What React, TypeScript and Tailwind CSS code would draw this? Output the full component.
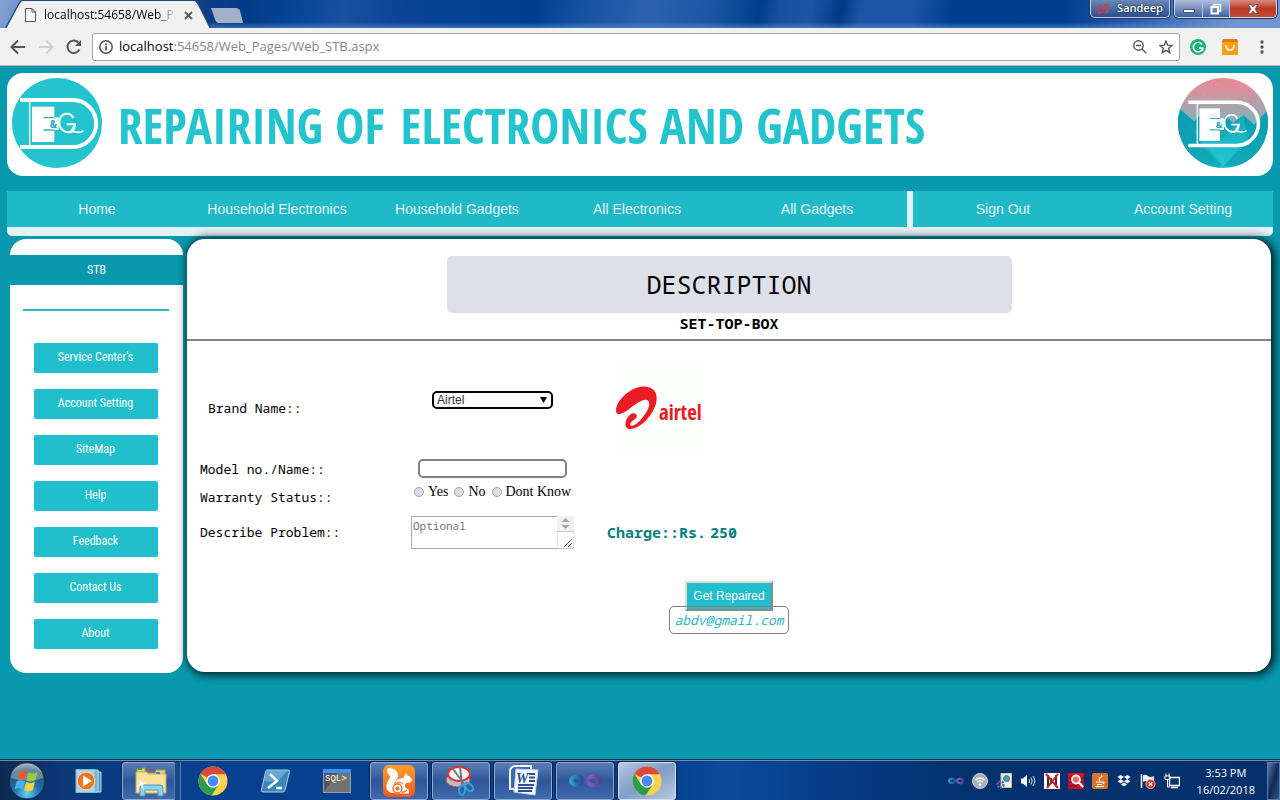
import type { ReactNode } from "react";

const mono = "font-['Noto_Sans_Mono','DejaVu_Sans_Mono',monospace]";
const segoe = "font-['Open_Sans','Noto_Sans',sans-serif]";

function Monogram() {
  return (
    <g fill="none" stroke="#fff">
      <path d="M24 66H182A70.500 70.500 0 0 1 182 207H24" strokeWidth="12" />
      <path d="M53 66V207" strokeWidth="4" />
      <path d="M60 86H127V192H60Z" fill="#fff" stroke="none" />
      <path d="M127 118H140V156H127Z" fill="#fff" stroke="none" />
      <path d="M94 119H127M94 156H127" stroke="#24b9c6" strokeWidth="4" />
      <path d="M184 120C176 102 150 103 143 124C137 146 153 164 171 163C186 162 187 150 189 139H164" strokeWidth="6" />
      <path d="M189 139L176 161C190 157 200 171 214 158" strokeWidth="5" />
      <text x="113" y="149" fontSize="29" fontWeight="700" fontFamily="Open Sans, sans-serif" fill="#24a9b8" stroke="none">&amp;</text>
    </g>
  );
}

function LogoPlain() {
  return (
    <svg className="size-[90px] shrink-0" viewBox="0 0 270 270" aria-hidden="true">
      <circle cx="135" cy="135" r="135" fill="#24c4cf" />
      <Monogram />
    </svg>
  );
}

function LogoScene() {
  return (
    <svg className="size-[90px] shrink-0" viewBox="0 0 270 270" aria-hidden="true">
      <defs>
        <linearGradient id="sky" x1="0" y1="0" x2="0" y2="1">
          <stop offset="0" stopColor="#e58a97" />
          <stop offset="0.12" stopColor="#dc909c" />
          <stop offset="0.5" stopColor="#7fb5bd" />
        </linearGradient>
        <linearGradient id="hill" x1="0" y1="0" x2="0" y2="1">
          <stop offset="0.3" stopColor="#0da0b1" />
          <stop offset="1" stopColor="#25cbd6" />
        </linearGradient>
        <clipPath id="disc"><circle cx="135" cy="135" r="135" /></clipPath>
      </defs>
      <g clipPath="url(#disc)">
        <rect width="270" height="270" fill="url(#sky)" />
        <path d="M0 88L48 130L75 105L110 140L145 115L165 135L197 112L228 140L270 95V270H0Z" fill="url(#hill)" />
        <path d="M0 110L135 265L0 270Z" fill="#0a9dae" opacity=".7" />
        <path d="M270 110L135 265L270 270Z" fill="#0a9dae" opacity=".7" />
        <path d="M60 190L135 268L210 190L197 112L135 180Z" fill="#22c6d1" opacity=".45" />
        <path d="M112 17l3 4M75 50h2M90 57h2M200 60h2M148 55h2" stroke="#f5ccd2" strokeWidth="2" />
      </g>
      <g transform="translate(9 12) scale(.92)"><Monogram /></g>
    </svg>
  );
}

function ChromeIcon() {
  return (
    <svg className="size-[30px]" viewBox="0 0 30 30" aria-hidden="true">
      <circle cx="15" cy="15" r="14.500" fill="#ffd24d" />
      <path d="M15 15L2.400 7.800A14.500 14.500 0 0 1 27.800 8.200H15Z" fill="#d94a3d" />
      <path d="M2.400 7.800A14.500 14.500 0 0 0 13.500 29.400L20.900 18.400L15 15L9.100 18.400Z" fill="#2f9a50" />
      <circle cx="15" cy="15" r="6.800" fill="#fff" />
      <circle cx="15" cy="15" r="5.400" fill="#4a8af4" />
    </svg>
  );
}

function StartOrb() {
  return (
    <svg className="size-[38px]" viewBox="0 0 38 38" aria-hidden="true">
      <defs>
        <radialGradient id="orb" cx=".5" cy=".85" r=".9">
          <stop offset="0" stopColor="#5fd7ee" />
          <stop offset=".4" stopColor="#1d6da5" />
          <stop offset=".75" stopColor="#2c5278" />
          <stop offset="1" stopColor="#a9bccb" />
        </radialGradient>
      </defs>
      <circle cx="19" cy="19" r="18" fill="url(#orb)" stroke="#0b2340" />
      <path d="M3 16A16 15 0 0 1 35 16Q19 21 3 16Z" fill="#fff" opacity=".3" />
      <path d="M11 11Q15 7 19 10L17 18Q13 15 9 18Z" fill="#f0562a" />
      <path d="M20.500 10.500Q25 13 29.500 10L27.500 18Q23 21 18.500 18.500Z" fill="#9bcb3c" />
      <path d="M8.500 19.500Q13 16.500 17 19.500L15 27.500Q11 24.500 6.500 27.500Z" fill="#47aef0" />
      <path d="M18 20Q22.500 22.500 27 19.500L25 27.500Q20.500 31 16 28Z" fill="#fdd040" />
    </svg>
  );
}

function MediaIcon() {
  return (
    <svg className="h-6 w-7" viewBox="0 0 28 24" aria-hidden="true">
      <path d="M10 3H26V23H10Z" fill="#4f96bd" stroke="#a9dcf2" />
      <path d="M6 1H23V23H6Z" fill="#6db3d6" stroke="#b9e6f7" />
      <path d="M1 .5H20V23.500H1Z" fill="#a8d6ea" stroke="#7fb9d4" />
      <circle cx="11" cy="12" r="8.800" fill="#ee7420" stroke="#fbd0a8" />
      <path d="M8 6.500L17 12L8 17.500Z" fill="#fff" />
    </svg>
  );
}

function FolderIcon() {
  return (
    <svg className="size-8" viewBox="0 0 32 32" aria-hidden="true">
      <path d="M2 4L10 3V8H20L21 5H30V28H2Z" fill="#e9cf7c" stroke="#b6974a" />
      <path d="M1 7H12L13 9H31V28H1Z" fill="#f6e3a0" stroke="#c6a95a" />
      <path d="M3 4h4" stroke="#2aa84a" strokeWidth="2" />
      <path d="M12 6h4" stroke="#d8442a" strokeWidth="2" />
      <path d="M21 8h4" stroke="#2c8ae0" strokeWidth="2" />
      <path d="M5 31V23Q5 20 8 20H25Q28 20 28 23V31H23V25H10V31Z" fill="#8fd0ea" stroke="#4b9cc4" />
      <path d="M7 13L8 18L12 17L8 20L9 25L6 21L1 22L5 18L3 14L7 17Z" fill="#fff" opacity=".8" />
    </svg>
  );
}

function PowerShellIcon() {
  return (
    <svg className="h-6 w-8" viewBox="0 0 32 24" aria-hidden="true">
      <path d="M8 1H29Q31 1 30.500 3L26 21Q25.500 23 24 23H4Q2 23 2.500 21L6.500 3Q7 1 8 1Z" fill="#3a86bb" stroke="#a9d5ea" />
      <path d="M8 1H29L20 11Q12 14 5 12Z" fill="#85bcdc" opacity=".6" />
      <path d="M11 5L18 12L9 19M17 19H23" fill="none" stroke="#fff" strokeWidth="2.500" />
    </svg>
  );
}

function SqlIcon() {
  return (
    <svg className="h-6 w-7" viewBox="0 0 28 24" aria-hidden="true">
      <rect x=".5" y=".5" width="27" height="23" fill="#555" stroke="#90a0b4" />
      <path d="M14 4H27V23L1 23Z" fill="#858585" opacity=".6" />
      <rect width="28" height="4" fill="#3f8ff8" />
      <text x="2" y="12" fontSize="9" fontFamily="Liberation Mono, monospace" fill="#fff">SQL&gt;</text>
    </svg>
  );
}

function SquirrelIcon() {
  return (
    <svg className="size-8" viewBox="0 0 32 32" aria-hidden="true">
      <defs>
        <linearGradient id="fur" x1="0" y1="0" x2="0" y2="1">
          <stop offset="0" stopColor="#fca12b" />
          <stop offset="1" stopColor="#f4581d" />
        </linearGradient>
      </defs>
      <rect width="32" height="32" rx="6" fill="url(#fur)" />
      <path d="M5 3C12 3 16 7 15 12C14.500 15 12 16 11 19C10 22 10 25 12 28H8C3 26 2 20 5 16C7 13 8 12 6 10C4 8 4 5 5 3Z" fill="#fff" />
      <path d="M12 19C13 15 17 13 20 13L22 10L23 8L24.500 10.500C27 11 28.500 13 29 15.500C28 17.500 25 18 23 18C21.500 20 21.500 22 23 23C26 24 26.500 26 26 28.500H12Z" fill="#fff" />
      <path d="M11 21Q15 15 20 19M24 25Q22 27 19 27.500" fill="none" stroke="#f77a26" strokeWidth="1.300" />
      <circle cx="14.500" cy="23.500" r="4.500" fill="#fff" stroke="#f66a20" strokeWidth="1.400" />
      <circle cx="14.500" cy="23.500" r="2" fill="#f66a20" />
    </svg>
  );
}

function SnipIcon() {
  return (
    <svg className="size-8" viewBox="0 0 32 32" aria-hidden="true">
      <ellipse cx="13" cy="15" rx="12" ry="7" fill="#b8bfc8" stroke="#c44" />
      <ellipse cx="14" cy="9" rx="11" ry="7" fill="#f3f4f6" stroke="#e2322d" strokeWidth="2" />
      <path d="M8 4L20 20M15 2L17 20" stroke="#707880" strokeWidth="2" />
      <ellipse cx="24" cy="22" rx="3" ry="5" transform="rotate(-45 24 22)" fill="none" stroke="#31a5dc" strokeWidth="2" />
      <ellipse cx="17" cy="25" rx="3" ry="5" transform="rotate(5 17 25)" fill="none" stroke="#31a5dc" strokeWidth="2" />
    </svg>
  );
}

function WordIcon() {
  return (
    <svg className="size-8" viewBox="0 0 32 32" aria-hidden="true">
      <path d="M3 24V7Q3 1 9 1H24V24Z" fill="#3d68ae" stroke="#f1f5fc" strokeWidth="2" />
      <path d="M9 4L31 5L28 30L7 27Z" fill="#f5f8fd" stroke="#c5d3e8" />
      <path d="M22 9H28M22 12.500H28M22 16H28M11 20H27M11 23H26M11 26H25" stroke="#2b4f93" strokeWidth="1.800" />
      <text x="9" y="18" fontSize="14" fontWeight="700" fontStyle="italic" fontFamily="Liberation Serif, serif" fill="#2b4f93">W</text>
    </svg>
  );
}

function InfinityIcon({ className }: { className: string }) {
  return (
    <svg className={className} viewBox="0 0 32 16" aria-hidden="true">
      <defs>
        <linearGradient id="ribbon" gradientUnits="userSpaceOnUse" x1="0" x2="32" y1="0" y2="0">
          <stop offset="0" stopColor="#2fb0d8" />
          <stop offset=".4" stopColor="#244f9c" />
          <stop offset=".65" stopColor="#8a5cc0" />
          <stop offset="1" stopColor="#553a86" />
        </linearGradient>
      </defs>
      <path d="M9 3.500C0 3.500 0 12 8 12C15 12 17 2.500 25 3.500C32 4.500 31 13 24 12.500C18 12 14 3.500 8 3.500" fill="none" stroke="url(#ribbon)" strokeWidth="4" />
    </svg>
  );
}

function TaskButton({ label, state = "idle", children }: { label: string; state?: "idle" | "open" | "active"; children: ReactNode }) {
  const look = {
    idle: "border-transparent",
    open: "border-[#8fa9d0] bg-linear-to-b from-[#5b7db3] via-[#2d579b] to-[#3f6aaa] shadow-[0_0_0_1px_#0a2350]",
    active: "border-[#d5e0f0] bg-linear-to-br from-[#b6c8e2] via-[#7f9dc8] to-[#b9cbe4] shadow-[0_0_0_1px_#0a2350]",
  }[state];
  return (
    <button aria-label={label} className={`flex h-[38px] w-[58px] items-center justify-center rounded-[3px] border ${look}`}>
      {children}
    </button>
  );
}

function TitleBar() {
  return (
    <div className="flex h-7 items-start justify-between bg-[linear-gradient(180deg,transparent_22px,rgba(110,155,215,.5)_28px),linear-gradient(100deg,#84a2d5_0,#7595cd_16px,#123f86_200px,#003a88_240px,#0a4596_300px,#1850a0_340px,#0a4394_400px,#003f8f_530px,#1450a0_570px,#2a62ae_640px,#1d57a5_700px,#003d89_750px,#1850a0_770px,#1c55a5_800px,#003a86_830px,#1c55a5_850px,#1c55a5_900px,#003e90_940px,#003e90_1050px,#3063b0_1130px,#7595cc_1220px)]">
      <div className="flex items-end self-end">
        <div className="ml-[5px] h-7 w-[206px] bg-[#23477f] [clip-path:polygon(0_100%,13px_4px,16px_0,190px_0,194px_4px,100%_100%)]">
          <div className="mt-px flex h-7 items-center gap-2 bg-[#f1f1f1] pl-5 pr-4 [clip-path:polygon(1px_100%,14px_4px,17px_0,190px_0,193px_4px,205px_100%)]">
            <svg className="h-3.5 w-[11px] shrink-0" viewBox="0 0 11 14" fill="#f6f6f6" stroke="#555" aria-hidden="true">
              <path d="M.5.5H7L10.500 4V13.500H.5ZM7 .5V4H10.500" />
            </svg>
            <span className={`w-[132px] whitespace-nowrap text-[12px] leading-4 text-black [mask-image:linear-gradient(90deg,#000_86%,transparent)] ${segoe}`}>
              localhost:54658/Web_Pa
            </span>
            <button aria-label="Close tab">
              <svg className="size-[9px]" viewBox="0 0 9 9" stroke="#5a5a5a" strokeWidth="1.800"><path d="M1 1L8 8M8 1L1 8" /></svg>
            </button>
          </div>
        </div>
        <button aria-label="New tab" className="mb-[5px] h-[15px] w-8 bg-[#a3b1c8] [clip-path:polygon(0_0,80%_0,90%_12%,100%_100%,22%_100%,15%_90%)]" />
      </div>
      <div className={`flex gap-1 pr-[3px] text-[11px] text-white ${segoe}`}>
        <button className="flex h-[18px] w-20 items-center justify-center gap-2 rounded-b-[5px] border border-t-0 border-[#c2d1e8] bg-linear-to-b from-[#6a88b9] to-[#2a4d8c] font-semibold shadow-[0_0_0_1px_#1b3668] [text-shadow:0_0_2px_#000]">
          <svg className="h-2.5 w-3 shrink-0" viewBox="0 0 12 10" fill="none" stroke="#d83c35" strokeWidth="1.500" aria-hidden="true">
            <path d="M4 1Q1 2 1 5T3 9M.5 9H4V6.500M8 9Q11 8 11 5T9 1M11.500 1H8V3.500M6 2V6M6 7.500V9" />
          </svg>
          Sandeep
        </button>
        <div className="flex h-[18px] overflow-hidden rounded-b-[5px] border border-t-0 border-[#d0dcee] shadow-[0_0_0_1px_#1b3668]">
          <button aria-label="Minimize" className="flex w-7 items-center justify-center border-r border-[#b4c5e0] bg-linear-to-b from-[#aebfdb] via-[#7790bd] via-50% to-[#3d60a0]">
            <svg className="h-3 w-3" viewBox="0 0 12 12"><path d="M.5 6.500H11.500V9.500H.5Z" fill="#fff" stroke="#465674" /></svg>
          </button>
          <button aria-label="Restore" className="flex w-[27px] items-center justify-center border-r border-[#b4c5e0] bg-linear-to-b from-[#aebfdb] via-[#7790bd] via-50% to-[#3d60a0]">
            <svg className="size-3" viewBox="0 0 12 12" fill="none"><path d="M4 3V1.500H10.500V8H9" stroke="#fff" strokeWidth="1.500" /><path d="M1.500 4H8V10.500H1.500Z" stroke="#fff" strokeWidth="2" /></svg>
          </button>
          <button aria-label="Close" className="flex w-[46px] items-center justify-center bg-linear-to-b from-[#d98a7e] via-[#bd3823] via-50% to-[#c24c34]">
            <svg className="h-2.5 w-3" viewBox="0 0 12 10"><path d="M1 .5H4L6 3L8 .5H11L8 5L11 9.500H8L6 7L4 9.500H1L4 5Z" fill="#fff" stroke="#5e4450" strokeWidth=".7" /></svg>
          </button>
        </div>
      </div>
    </div>
  );
}

function Toolbar() {
  return (
    <div className="flex h-[38px] items-center border-b border-[#b6b4b6] bg-[#f2f1f2] pl-[10px] pr-3">
      <div className="flex items-center gap-3 pr-[10px]">
        <button aria-label="Back">
          <svg className="size-4" viewBox="0 0 16 16" fill="none" stroke="#555" strokeWidth="2"><path d="M15 8H2M8 1.500L1.500 8L8 14.500" /></svg>
        </button>
        <button aria-label="Forward">
          <svg className="size-4" viewBox="0 0 16 16" fill="none" stroke="#cfcfcf" strokeWidth="2"><path d="M1 8H14M8 1.500L14.500 8L8 14.500" /></svg>
        </button>
        <button aria-label="Reload">
          <svg className="size-4" viewBox="0 0 16 16" fill="none" stroke="#555" strokeWidth="2"><path d="M13.500 10.500A6.300 6.300 0 1 1 12.500 3.500" /><path d="M15 1V7H9Z" fill="#555" stroke="none" /></svg>
        </button>
      </div>
      <div className={`flex h-7 flex-1 items-center rounded-[3px] border border-[#a5a5a5] bg-white px-1.5 text-[13px] ${segoe}`}>
        <svg className="mr-[6px] size-3.5" viewBox="0 0 14 14" fill="none" stroke="#555" strokeWidth="1.500" aria-hidden="true"><circle cx="7" cy="7" r="6.200" /><path d="M7 6V10.500M7 3.500V5" strokeWidth="1.800" /></svg>
        <div className="flex-1 whitespace-nowrap text-[#858585]"><span className="text-black">localhost</span>:54658/Web_Pages/Web_STB.aspx</div>
        <button aria-label="Zoom" className="mr-3">
          <svg className="size-3.5" viewBox="0 0 14 14" fill="none" stroke="#555" strokeWidth="1.400"><circle cx="5.500" cy="5.500" r="4.700" /><path d="M3 5.500H8M9 9L13.300 13.300" /></svg>
        </button>
        <button aria-label="Bookmark this page">
          <svg className="size-3.5" viewBox="0 0 14 14" fill="none" stroke="#555" strokeWidth="1.400"><path d="M7 1.200L8.700 5.200L13 5.500L9.700 8.200L10.700 12.700L7 10.300L3.300 12.700L4.300 8.200L1 5.500L5.300 5.200Z" /></svg>
        </button>
      </div>
      <button aria-label="Grammar checker" className="ml-[10px]">
        <svg className="size-4" viewBox="0 0 16 16"><circle cx="8" cy="8" r="8" fill="#1cb474" /><path d="M12 5.500A4.700 4.700 0 1 0 12.700 9H9M12.700 9V12" fill="none" stroke="#fff" strokeWidth="1.400" /></svg>
      </button>
      <button aria-label="Shopping" className="ml-4">
        <svg className="size-4" viewBox="0 0 16 16"><path d="M0 2H16V16H0Z" fill="#fa9f12" /><path d="M1 0H15L16 3H0Z" fill="#e87820" /><path d="M4 6Q4 11 8 11T12 6" fill="none" stroke="#fff" strokeWidth="1.500" /></svg>
      </button>
      <button aria-label="Menu" className="ml-[22px] mr-1">
        <svg className="h-3.5 w-1" viewBox="0 0 4 14" fill="#555"><circle cx="2" cy="2" r="1.700" /><circle cx="2" cy="7" r="1.700" /><circle cx="2" cy="12" r="1.700" /></svg>
      </button>
    </div>
  );
}

function NavLink({ children }: { children: ReactNode }) {
  return (
    <a href="#" className="flex h-9 flex-1 items-center justify-center bg-[#1fb9c7] text-sm text-[#e4f6f8]">{children}</a>
  );
}

const sideLinks = ["Service Center's", "Account Setting", "SiteMap", "Help", "Feedback", "Contact Us", "About"];

function Sidebar() {
  return (
    <aside className="w-[173px] shrink-0 rounded-[16px] bg-white pt-4 text-center font-['Roboto_Condensed','Open_Sans_Condensed',sans-serif] text-[12px] text-white">
      <div className="h-[30px] bg-[#0899ae] leading-[30px]">STB</div>
      <hr className="mt-6 mr-3.5 ml-[13px] border-t-2 border-[#20bfcb]" />
      <nav className="mt-8 flex flex-col items-center gap-4 pr-0.5 pb-6">
        {sideLinks.map((label) => (
          <a key={label} href="#" className="h-[30px] w-[124px] rounded-[2px] bg-[#20bfcb] leading-[29px]">{label}</a>
        ))}
      </nav>
    </aside>
  );
}

function AirtelLogo() {
  return (
    <svg className="size-[90px]" viewBox="0 0 270 270" role="img" aria-label="airtel">
      <rect width="270" height="270" fill="#fbfefb" />
      <path d="M8 151C2 136 12 112 38 91C65 69 101 62 120 82C137 103 126 139 99 169C82 189 58 201 43 197C29 193 33 167 48 155C58 147 71 151 68 161C66 169 51 173 48 184C48 194 65 187 80 170C98 150 111 127 104 115C94 103 73 116 48 136C33 149 14 158 8 151Z" fill="#ec1c24" />
      <text x="135" y="171" fontSize="62" fontWeight="700" fontFamily="Open Sans Condensed, sans-serif" fill="#ec1c24">airtel</text>
    </svg>
  );
}

function RepairForm() {
  return (
    <form className={`px-[13px] pt-[22px] text-[13px] leading-4 text-black ${mono}`} onSubmit={(e) => e.preventDefault()}>
      <div className="grid grid-cols-[211px_163px_1fr] items-center gap-y-[6px]">
        <label htmlFor="brand" className="pl-2">Brand Name::</label>
        <div className="relative -mt-4 w-[121px] justify-self-center">
          <select id="brand" defaultValue="Airtel" className="block h-[18px] w-full appearance-none rounded-[5px] border-2 border-black bg-white pl-[3px] font-['Liberation_Sans',Arial,sans-serif] text-[12px] leading-[14px] text-[#1d3346]">
            <option>Airtel</option>
            <option>Tata Sky</option>
            <option>Dish TV</option>
          </select>
          <svg className="pointer-events-none absolute top-[6px] right-[6px] h-[6px] w-[7px]" viewBox="0 0 7 6" aria-hidden="true"><path d="M0 0H7L3.500 6Z" fill="#000" /></svg>
        </div>
        <div className="pl-10"><AirtelLogo /></div>

        <label htmlFor="model">Model no./Name::</label>
        <input id="model" type="text" className="h-[19px] w-[149px] justify-self-center rounded-[5px] border-2 border-[#808080] px-1 text-[12px]" />
        <span />

        <span id="warranty" className="pt-[5px]">Warranty Status::</span>
        <div role="radiogroup" aria-labelledby="warranty" className="flex items-center gap-[6px] self-start whitespace-nowrap pl-[3px] font-['Liberation_Serif','Times_New_Roman',serif] text-[14px]">
          {["Yes", "No", "Dont Know"].map((label) => (
            <label key={label} className="flex items-center gap-1">
              <input type="radio" name="warranty" className="size-[10px] appearance-none rounded-full border border-[#a3a3a3] bg-[#dedede] checked:bg-[#555]" />
              {label}
            </label>
          ))}
        </div>
        <span />

        <label htmlFor="problem" className="mt-1">Describe Problem::</label>
        <div className="relative mt-[5px]">
          <textarea id="problem" placeholder="Optional" className="block h-[33px] w-full resize-none overflow-hidden border border-[#a9a9a9] px-[1px] py-[2px] text-[11px] leading-[14px] placeholder:text-[#757575]" />
          <svg className="pointer-events-none absolute top-0 right-0 h-[33px] w-[17px]" viewBox="0 0 17 33" aria-hidden="true">
            <rect width="17" height="15" fill="#f1f1f1" />
            <path d="M4.500 6L8.500 2L12.500 6ZM4.500 9L8.500 13L12.500 9Z" fill="#a3a3a3" />
            <path d="M0 15.500H17V32.500H0Z" fill="#fff" stroke="#c8c8c8" />
            <path d="M7 31L15 23M11 31L15 27" stroke="#555" />
          </svg>
        </div>
        <p className="mt-1 flex gap-1 pl-[33px] text-[15px] font-bold text-[#067f80]">
          <span>Charge::Rs.</span>
          <span>250</span>
        </p>
      </div>

      <div className="mt-8 flex flex-col items-center pb-[38px]">
        <button type="submit" className="h-[30px] border-2 border-t-[#dcdcdc] border-r-[#8a8a8a] border-b-[#8a8a8a] border-l-[#dcdcdc] bg-[#20bfcb] px-[6px] font-['Liberation_Sans',Arial,sans-serif] text-[12px] text-white">Get Repaired</button>
        <a href="#" className="relative -mt-[5px] rounded-[5px] border border-[#808080] px-1 py-[5px] text-[13px] text-[#1fb5c4] italic">abdv@gmail.com</a>
      </div>
    </form>
  );
}

function Taskbar() {
  return (
    <footer className="flex h-10 items-center border-t border-[#6c8cb4] bg-[linear-gradient(90deg,#0e2a52_0,#0b3876_60px,#06408f_180px,#06408f_660px,#0b4a9a_730px,#063e8a_820px,#04326f_950px,#05306a_100%)] shadow-[0_-1px_0_#12304e]">
      <button aria-label="Start" className="mr-[14px] ml-2 shrink-0"><StartOrb /></button>
      <div className="flex items-center gap-1">
        <TaskButton label="Media Player"><MediaIcon /></TaskButton>
        <div className="relative">
          <TaskButton label="Explorer" state="open"><FolderIcon /></TaskButton>
          <div className="pointer-events-none absolute inset-y-0 -right-px w-[7px] border-x border-[#5b7db3] bg-[#174787]" />
        </div>
        <TaskButton label="Google Chrome"><ChromeIcon /></TaskButton>
        <TaskButton label="PowerShell"><PowerShellIcon /></TaskButton>
        <TaskButton label="SQL command line"><SqlIcon /></TaskButton>
        <TaskButton label="UC Browser" state="open"><SquirrelIcon /></TaskButton>
        <TaskButton label="Snipping Tool" state="open"><SnipIcon /></TaskButton>
        <TaskButton label="Word" state="open"><WordIcon /></TaskButton>
        <TaskButton label="Visual Studio" state="open"><InfinityIcon className="h-4 w-8" /></TaskButton>
        <TaskButton label="Google Chrome window" state="active"><ChromeIcon /></TaskButton>
      </div>
      <div className="ml-auto flex items-center gap-2">
        <InfinityIcon className="h-2 w-4" />
        <svg className="size-4" viewBox="0 0 16 16" fill="none" aria-hidden="true"><circle cx="8" cy="8" r="7.500" fill="#a8aeb6" stroke="#d5d9de" /><path d="M3.500 7Q8 3 12.500 7M5.200 9.200Q8 6.500 10.800 9.200" stroke="#fff" strokeWidth="1.300" /><circle cx="8" cy="11.500" r="1.200" fill="#fff" /></svg>
        <svg className="size-4" viewBox="0 0 16 16" aria-hidden="true"><path d="M5 .5H15.500V14.500H5Z" fill="#f7f5dc" stroke="#c9c39a" /><circle cx="10.500" cy="5.500" r="3.500" fill="#3b8fd0" /><path d="M9 3L12 5L10 8Z" fill="#4bb04a" /><circle cx="4.500" cy="11.500" r="3" fill="none" stroke="#5a68b8" strokeWidth="2.500" strokeDasharray="2 1" /></svg>
        <svg className="size-4" viewBox="0 0 16 16" aria-hidden="true"><path d="M1 5.500H3L7 2V14L3 10.500H1Z" fill="#fff" /><path d="M9 6Q10.500 8 9 10M11 4.500Q13.500 8 11 11.500M13 3Q16.500 8 13 13" fill="none" stroke="#dfe6f0" /></svg>
        <svg className="size-4" viewBox="0 0 16 16" aria-hidden="true"><path d="M0 0H16V16H0Z" fill="#fff" /><path d="M4 2V14M12 2V14M7 5V11" stroke="#27306e" strokeWidth="2" /><path d="M2 1L14 15M14 1L3 15" stroke="#d81818" strokeWidth="2" /></svg>
        <svg className="size-4" viewBox="0 0 16 16" aria-hidden="true"><path d="M0 0H16V16H0Z" fill="#e00f12" /><path d="M0 5H4M0 9H4M0 13H9M12 5H16M12 9H16" stroke="#1d1a8a" /><circle cx="8" cy="6.500" r="4" fill="#f66" stroke="#fff" strokeWidth="1.800" /><path d="M11 9.500L15 14" stroke="#fff" strokeWidth="2" /></svg>
        <svg className="size-4" viewBox="0 0 16 16" fill="none" aria-hidden="true"><rect width="16" height="16" rx="2" fill="#dc7427" /><path d="M8 8Q6 6 8.500 4.500T9 2M4 9H11M11 9Q13 9 11 11M5 11.500H10M3 13.500H12" stroke="#fff" strokeWidth="1.200" /></svg>
        <svg className="size-4" viewBox="0 0 16 16" fill="#fff" aria-hidden="true"><path d="M4.800 2L8 4L4.800 6.200L1.500 4ZM11.200 2L14.500 4L11.200 6.200L8 4ZM4.800 6.200L8 8.300L4.800 10.500L1.500 8.300ZM11.200 6.200L14.500 8.300L11.200 10.500L8 8.300ZM8 9.500L11 11.500L8 13.500L5 11.500Z" /></svg>
        <svg className="size-4" viewBox="0 0 16 16" aria-hidden="true"><path d="M1.500 1V15" stroke="#fff" strokeWidth="1.500" /><path d="M3 2Q6 1 8 3T14 3V10Q10 11 8 9T3 9Z" fill="#eef1f5" /><circle cx="10.500" cy="11" r="4.500" fill="#d92a22" stroke="#f3b5b0" /><path d="M8.800 9.300L12.200 12.700M12.200 9.300L8.800 12.700" stroke="#fff" strokeWidth="1.400" /></svg>
        <svg className="size-4" viewBox="0 0 16 16" fill="none" stroke="#fff" aria-hidden="true"><path d="M5.500 4.500H15.500V12.500H5.500ZM7 14.500H14" strokeWidth="1.400" /><path d="M1 3H6V6.500H1ZM2 .5V3M5 .5V3M3.500 6.500V14H6" /></svg>
      </div>
      <div className={`mr-3 ml-[17px] text-center text-[11px] leading-[17px] text-white ${segoe}`}>
        <div>3:53 PM</div>
        <div>16/02/2018</div>
      </div>
      <button aria-label="Show desktop" className="h-[38px] w-[13px] border border-[#5b7ba8] bg-linear-to-br from-[#5b7ba6] via-[#0d2c57] to-[#2a5587]" />
    </footer>
  );
}

export default function App() {
  return (
    <div className="flex min-h-screen flex-col overflow-hidden bg-[#0899ae] font-['Liberation_Sans',Arial,sans-serif]">
      <TitleBar />
      <Toolbar />
      <main className="flex-1 px-[7px] pt-[7px]">
        <header className="flex items-center rounded-[16px] bg-white px-[5px] pt-[5px] pb-2">
          <LogoPlain />
          <h1 className="flex flex-1 gap-4 pt-1 pl-4 font-['Open_Sans_Condensed',sans-serif] text-[49px] leading-[60px] font-bold whitespace-nowrap text-[#24c4cf]">
            <span>REPAIRING OF</span>
            <span>ELECTRONICS AND GADGETS</span>
          </h1>
          <LogoScene />
        </header>
        <nav className="mt-[15px] flex gap-[6px] rounded-b-[5px] bg-[#e4f2f6] pb-[9px]">
          <div className="flex flex-[5]">
            <NavLink>Home</NavLink>
            <NavLink>Household Electronics</NavLink>
            <NavLink>Household Gadgets</NavLink>
            <NavLink>All Electronics</NavLink>
            <NavLink>All Gadgets</NavLink>
          </div>
          <div className="flex flex-[2]">
            <NavLink>Sign Out</NavLink>
            <NavLink>Account Setting</NavLink>
          </div>
        </nav>
        <div className="mt-[3px] flex items-start gap-1 pr-0.5 pl-[3px]">
          <Sidebar />
          <section className="flex-1 rounded-[18px] bg-white pt-[17px] shadow-[2px_1px_10px_2px_#001c22]">
            <h2 className={`mx-auto h-[57px] w-[565px] rounded-[5px] bg-[#dde0e9] text-center text-[25px] leading-[57px] text-black ${mono}`}>DESCRIPTION</h2>
            <h3 className={`text-center text-[15px] leading-5 font-bold text-black ${mono}`}>SET-TOP-BOX</h3>
            <hr className="mt-[6px] border-t-2 border-[#808080]" />
            <RepairForm />
          </section>
        </div>
      </main>
      <Taskbar />
    </div>
  );
}
